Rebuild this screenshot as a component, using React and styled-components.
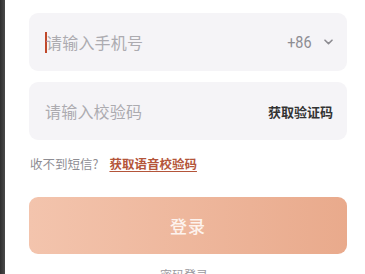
import React from "react";
import styled, { createGlobalStyle } from "styled-components";

const GlobalStyle = createGlobalStyle`
  html, body {
    margin: 0;
    padding: 0;
    background: #ffffff;
    font-family: "Noto Sans CJK SC", "Noto Sans", sans-serif;
  }
`;

const Screen = styled.div`
  width: 365px;
  height: 274px;
  overflow: hidden;
  display: flex;
  background: #ffffff;
`;

const Edge = styled.div`
  width: 5px;
  flex-shrink: 0;
  background: linear-gradient(90deg, #2e2e2e, #4a4a4a);
`;

const Form = styled.div`
  flex: 1;
  padding: 13px 18px 0 24px;
  display: flex;
  flex-direction: column;
`;

const Field = styled.div`
  height: 58px;
  flex-shrink: 0;
  margin-bottom: ${(p) => p.gap || 0}px;
  border-radius: 9px;
  background: #f5f4f7;
  display: flex;
  align-items: center;
  padding: 0 14px 0 16px;
`;

const Caret = styled.span`
  width: 2px;
  height: 21px;
  background: #c0482a;
  margin-right: -1px;
`;

const Placeholder = styled.span`
  flex: 1;
  font-size: 16px;
  color: #acabb0;
  letter-spacing: 0.2px;
`;

const Code = styled.span`
  font-family: "Roboto", "Noto Sans", sans-serif;
  font-size: 17px;
  color: #8d8c92;
  margin-right: 10px;
  transform: scaleX(0.85);
`;

const Action = styled.span`
  font-size: 13px;
  font-weight: 700;
  color: #333333;
`;

const Hint = styled.div`
  margin-top: 14px;
  font-size: 12.5px;
  color: #8e8d93;
  display: flex;
  align-items: center;
  padding-left: 1px;
`;

const VoiceLink = styled.a`
  margin-left: 11px;
  color: #b4553a;
  font-weight: 700;
  text-decoration: underline;
  text-underline-offset: 2px;
`;

const Submit = styled.button`
  margin-top: 24px;
  height: 57px;
  flex-shrink: 0;
  border: none;
  border-radius: 9px;
  background: linear-gradient(90deg, #f3c4ad, #e9aa8c);
  color: #fdf3ee;
  font-family: inherit;
  font-size: 17px;
  font-weight: 500;
  letter-spacing: 1px;
`;

const Footer = styled.div`
  margin-top: 12px;
  text-align: center;
  font-size: 12px;
  color: #9a999e;
  padding-right: 8px;
`;

function Chevron() {
  return (
    <svg width="9" height="6" viewBox="0 0 9 6">
      <path d="M1 1.2 L4.5 4.6 L8 1.2" fill="none" stroke="#8d8c92" strokeWidth="1.6" strokeLinecap="round" strokeLinejoin="round" />
    </svg>
  );
}

export default function App() {
  return (
    <Screen>
      <GlobalStyle />
      <Edge />
      <Form>
        <Field gap={11}>
          <Caret />
          <Placeholder>请输入手机号</Placeholder>
          <Code>+86</Code>
          <Chevron />
        </Field>
        <Field>
          <Placeholder>请输入校验码</Placeholder>
          <Action>获取验证码</Action>
        </Field>
        <Hint>
          收不到短信?
          <VoiceLink>获取语音校验码</VoiceLink>
        </Hint>
        <Submit>登录</Submit>
        <Footer>密码登录</Footer>
      </Form>
    </Screen>
  );
}
